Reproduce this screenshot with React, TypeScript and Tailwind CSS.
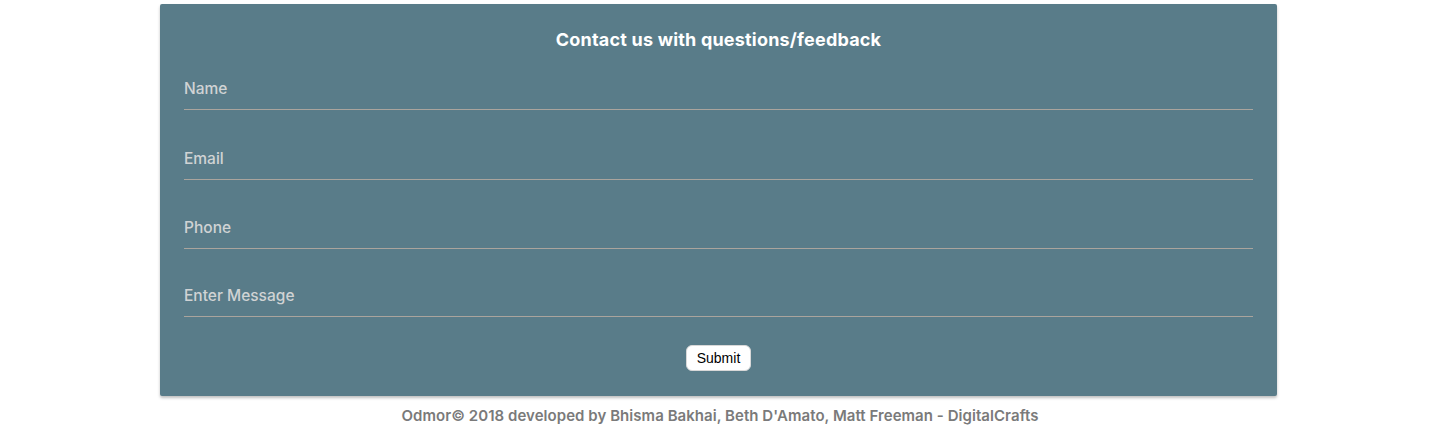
import React from "react";

const fields = [
  { label: "Name", mt: "mt-[11px]" },
  { label: "Email", mt: "mt-[24px]" },
  { label: "Phone", mt: "mt-[23px]" },
  { label: "Enter Message", mt: "mt-[22px]" },
];

export default function App() {
  return (
    <div className="w-[1440px] h-[426px] bg-white pt-[4px] font-['Inter','Liberation_Sans',sans-serif]">
      <div className="ml-[160px] w-[1117px] bg-[#597c89] rounded-[2px] shadow-[0_2px_3px_rgba(0,0,0,0.25)] px-[24px] pt-[23px] pb-[25px]">
        <h2 className="text-center text-white font-bold text-[18px] leading-[26px] tracking-[0.2px]">
          Contact us with questions/feedback
        </h2>
        {fields.map((f) => (
          <div
            key={f.label}
            className={`${f.mt} h-[46px] pt-[13px] border-b border-[#aaa49d] text-[15.5px] leading-[24px] font-medium text-[#d0d3d4]`}
          >
            {f.label}
          </div>
        ))}
        <div className="mt-[28px] flex justify-center">
          <button className="h-[26px] w-[65px] bg-white text-black text-[14px] leading-[20px] rounded-[6px] border border-[#d8d8d8] font-['Liberation_Sans',sans-serif]">
            Submit
          </button>
        </div>
      </div>
      <p className="mt-[10px] text-center text-[15px] leading-[20px] font-semibold text-[#7a7a7a] tracking-[0.05px]">
        Odmor© 2018 developed by Bhisma Bakhai, Beth D'Amato, Matt Freeman - DigitalCrafts
      </p>
    </div>
  );
}
